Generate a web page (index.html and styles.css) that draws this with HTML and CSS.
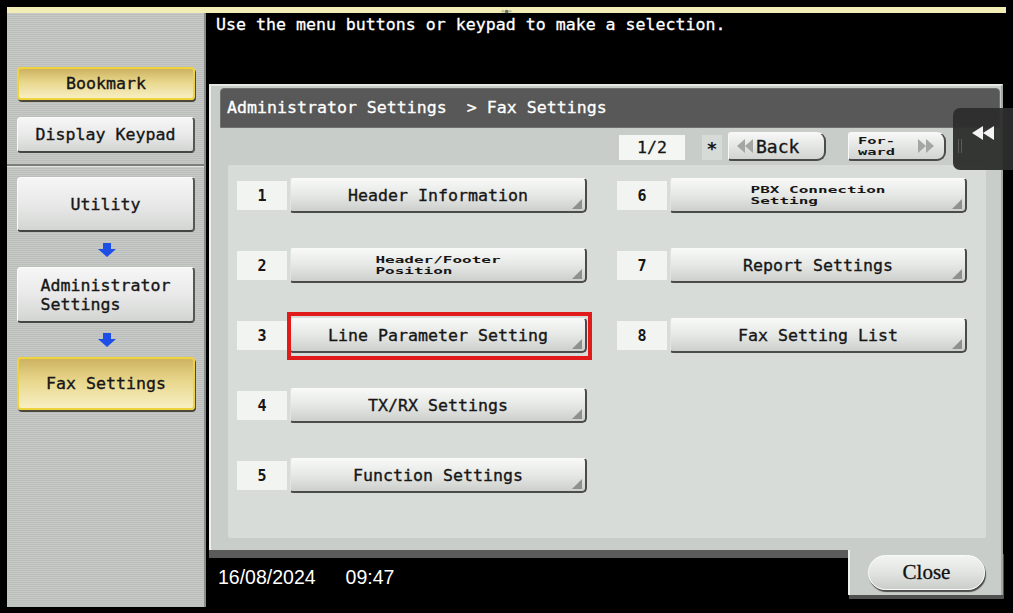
FILE: index.html
```html
<!DOCTYPE html>
<html lang="en">
<head>
<meta charset="utf-8">
<title>Fax Settings</title>
<link rel="stylesheet" href="styles.css">
</head>
<body>
<div class="frame">
  <div class="topstrip"><span class="grip">«●»</span></div>
  <div class="body">
    <aside class="sidebar">
      <div class="sb-top">
        <div class="sbtn yellow bookmark">Bookmark</div>
        <div class="sbtn grey keypad">Display Keypad</div>
      </div>
      <div class="sb-divider"></div>
      <div class="sb-nav">
        <div class="sbtn grey tall">Utility</div>
        <div class="arrow a1"><svg width="18" height="14" viewBox="0 0 18 14"><path d="M5 0h8v6h5l-9 8-9-8h5z" fill="#1d4fe6"/></svg></div>
        <div class="sbtn grey tall56"><span class="lft">Administrator<br>Settings</span></div>
        <div class="arrow a2"><svg width="18" height="14" viewBox="0 0 18 14"><path d="M5 0h8v6h5l-9 8-9-8h5z" fill="#1d4fe6"/></svg></div>
        <div class="sbtn yellow fax">Fax Settings</div>
      </div>
    </aside>
    <main class="main">
      <div class="message">Use the menu buttons or keypad to make a selection.</div>
      <div class="panel">
        <div class="titlebar">Administrator Settings  &gt; Fax Settings</div>
        <div class="pager">
          <div class="pg-box">1/2</div>
          <div class="star">*</div>
          <div class="navbtn back">
            <svg width="16" height="14" viewBox="0 0 16 14"><path d="M8 0v14L0 7z M16 0v14L8 7z" fill="#a4a6a4"/></svg>
            <span class="back-label">Back</span>
          </div>
          <div class="navbtn fwd">
            <span class="small">For-<br>ward</span>
            <svg width="16" height="14" viewBox="0 0 16 14"><path d="M0 0v14l8-7z M8 0v14l8-7z" fill="#a4a6a4"/></svg>
          </div>
        </div>
        <div class="content">
          <div class="grid">
            <div class="item"><span class="num">1</span><div class="mbtn">Header Information</div></div>
            <div class="item"><span class="num">2</span><div class="mbtn"><span class="small">Header/Footer<br>Position</span></div></div>
            <div class="item"><span class="num">3</span><div class="mbtn marked">Line Parameter Setting</div></div>
            <div class="item"><span class="num">4</span><div class="mbtn">TX/RX Settings</div></div>
            <div class="item"><span class="num">5</span><div class="mbtn">Function Settings</div></div>
            <div class="item"><span class="num">6</span><div class="mbtn"><span class="small">PBX Connection<br>Setting</span></div></div>
            <div class="item"><span class="num">7</span><div class="mbtn">Report Settings</div></div>
            <div class="item"><span class="num">8</span><div class="mbtn">Fax Setting List</div></div>
          </div>
        </div>
      </div>
      <div class="footer">
        <div class="datebar"><span class="date">16/08/2024</span><span>09:47</span></div>
        <div class="closetab"><div class="closebtn">Close</div></div>
      </div>
      <div class="sidetab">
        <span class="tabgrip"></span>
        <svg width="22" height="14" viewBox="0 0 22 14"><path d="M11 0v14L0 7z M22 0v14L11 7z" fill="#f4f4f4"/></svg>
      </div>
    </main>
  </div>
</div>
</body>
</html>
```
FILE: styles.css
```css
* { box-sizing: border-box; margin: 0; padding: 0; }
html, body { background: #000; }
body {
  width: 1013px;
  height: 613px;
  overflow: hidden;
  font-family: "DejaVu Sans Mono", "Liberation Mono", monospace;
  font-size: 16.6px;
  color: #161616;
}
.frame {
  height: 613px;
  padding: 7px 7px 6px 7px;
  display: flex;
  flex-direction: column;
}
.topstrip {
  height: 6px;
  background: #f2ecb6;
  display: flex;
  justify-content: center;
  align-items: center;
}
.grip { font-size: 6px; line-height: 5px; color: #6a6a6a; }
.body { flex: 1; display: flex; min-height: 0; }

/* sidebar */
.sidebar {
  width: 199px;
  flex: none;
  background: repeating-linear-gradient(180deg, #c7c9c7 0, #c7c9c7 1px, #bcbebc 1px, #bcbebc 2px);
  border-right: 2px solid #8a8c8a;
  display: flex;
  flex-direction: column;
}
.sb-top { padding: 54px 9px 11px 10px; display: flex; flex-direction: column; }
.sb-divider { border-top: 2px solid #7c7e7c; border-bottom: 1px solid #e2e4e2; }
.sb-nav { padding: 10px 9px 0 10px; display: flex; flex-direction: column; }
.sbtn {
  display: flex;
  align-items: center;
  justify-content: center;
  border-radius: 4px;
  white-space: nowrap;
  -webkit-text-stroke: 0.35px #161616;
}
.sbtn.grey {
  background: linear-gradient(180deg, #f5f6f5 0%, #e8e9e8 50%, #d3d5d3 100%);
  border: 1px solid #fbfbfb;
  border-right: 2px solid #555755;
  border-bottom: 2px solid #444644;
}
.sbtn.yellow {
  background: linear-gradient(180deg, #cdb261 0%, #e8d78c 45%, #f7efc4 100%);
  border: 2px solid #efd33c;
  box-shadow: 1px 2px 0 #4c4838;
}
.bookmark { height: 33px; margin-bottom: 17px; }
.keypad { height: 36px; }
.tall { height: 55px; }
.tall56 { height: 56px; }
.fax { height: 53px; }
.lft { text-align: left; line-height: 19px; }
.arrow { display: flex; justify-content: center; align-items: center; padding-left: 1px; }
.a1 { height: 35px; }
.a2 { height: 34px; }

/* main */
.main { flex: 1; position: relative; display: flex; flex-direction: column; }
.message {
  height: 71px;
  padding: 2px 0 0 10px;
  color: #fff;
  line-height: 20px;
  white-space: pre;
  -webkit-text-stroke: 0.3px #fff;
}
.panel {
  height: 466px;
  margin: 0 3px;
  background: #c9cdc9;
  border-top: 2px solid #e4e7e4;
  border-left: 2px solid #eef0ee;
  border-right: 2px solid #a4a8a4;
  padding: 2px 1px 12px 9px;
  display: flex;
  flex-direction: column;
}
.titlebar {
  height: 40px;
  background: #575857;
  border: 1px solid #6f706f;
  border-radius: 4px 4px 0 0;
  color: #fff;
  line-height: 38px;
  padding-left: 6px;
  white-space: pre;
  -webkit-text-stroke: 0.3px #fff;
}
.pager {
  height: 37px;
  display: flex;
  align-items: center;
  justify-content: flex-end;
  padding-right: 54px;
}
.pg-box {
  width: 66px;
  height: 25px;
  background: #f4f6f4;
  text-align: center;
  line-height: 25px;
  margin-right: 17px;
  margin-top: 2px;
  -webkit-text-stroke: 0.3px #161616;
}
.star {
  width: 20px;
  height: 25px;
  background: #d7dbd7;
  text-align: center;
  line-height: 27px;
  font-size: 18px;
  font-weight: bold;
  margin-right: 6px;
  margin-top: 2px;
}
.navbtn {
  width: 98px;
  height: 29px;
  border-radius: 3px 9px 9px 3px;
  background: linear-gradient(180deg, #f6f7f6 0%, #e4e6e4 50%, #d2d4d2 100%);
  border: 1px solid #f8f8f8;
  border-right: 2px solid #4a4b4a;
  border-bottom: 2px solid #4a4b4a;
  display: flex;
  align-items: center;
}
.back { padding-left: 8px; margin-right: 22px; }
.back-label { font-size: 18px; margin-left: 3px; -webkit-text-stroke: 0.35px #161616; }
.fwd { padding: 0 10px 0 9px; justify-content: space-between; }
.small {
  display: inline-block;
  text-align: left;
  font-size: 16px;
  font-weight: bold;
  line-height: 19px;
  transform: scaleY(0.58);
  -webkit-text-stroke: 0;
}
.fwd .small { font-size: 15.4px; line-height: 18.5px; }
.content {
  flex: 1;
  margin: 0 14px 0 8px;
  background: #d8dcd8;
  border-radius: 2px;
  padding: 13px 0 0 9px;
}
.grid {
  display: grid;
  grid-template-columns: 350px 350px;
  grid-template-rows: repeat(5, 35px);
  grid-auto-flow: column;
  column-gap: 30px;
  row-gap: 35px;
}
.item { display: flex; align-items: center; gap: 3px; }
.num {
  width: 50px;
  height: 29px;
  background: #f2f4f2;
  display: flex;
  align-items: center;
  justify-content: center;
  font-weight: bold;
  font-size: 15px;
}
.mbtn {
  position: relative;
  width: 297px;
  height: 35px;
  display: flex;
  align-items: center;
  justify-content: center;
  white-space: nowrap;
  background: linear-gradient(180deg, #f7f8f7 0%, #e6e8e6 50%, #cdcfcd 100%);
  border-top: 1px solid #fafafa;
  border-left: 1px solid #e2e4e2;
  border-right: 2px solid #4a4b4a;
  border-bottom: 2px solid #4a4b4a;
  border-radius: 3px 4px 5px 3px;
  -webkit-text-stroke: 0.35px #161616;
}
.mbtn::after {
  content: "";
  position: absolute;
  right: 3px;
  bottom: 2px;
  width: 10px;
  height: 10px;
  background: #8f918f;
  clip-path: polygon(100% 0, 100% 100%, 0 100%);
}
.mbtn.marked::before {
  content: "";
  position: absolute;
  left: -4px;
  top: -7px;
  right: -7px;
  bottom: -9px;
  border: 4px solid #e11b1b;
  pointer-events: none;
}

/* footer */
.footer { flex: 1; display: flex; }
.datebar {
  flex: 1;
  margin-left: 3px;
  border-top: 8px solid #5a5b5a;
  padding: 7px 0 0 9px;
  color: #fff;
  font-family: "Liberation Sans", Arial, sans-serif;
  font-size: 19.5px;
  line-height: 24px;
}
.date { margin-right: 30px; }
.closetab {
  width: 155px;
  height: 45px;
  margin-right: 3px;
  background: #c9cdc9;
  border-left: 2px solid #eef0ee;
  border-right: 2px solid #a4a8a4;
  box-shadow: 1px 4px 0 #4f504f;
  padding: 5px 0 0 18px;
}
.closebtn {
  width: 117px;
  height: 35px;
  border-radius: 18px;
  background: linear-gradient(180deg, #f2f4f2 0%, #e2e4e2 50%, #cbcdcb 100%);
  border: 1px solid #fafafa;
  box-shadow: 1px 2px 1px #4a4b4a;
  display: flex;
  align-items: center;
  justify-content: center;
  font-family: "Liberation Serif", "Times New Roman", serif;
  font-size: 21px;
  color: #111;
  -webkit-text-stroke: 0.3px #111;
}

/* overlay side tab */
.sidetab {
  position: absolute;
  top: 95px;
  right: -7px;
  width: 60px;
  height: 62px;
  background: rgba(44, 45, 44, 0.95);
  border-radius: 7px 0 0 7px;
  display: flex;
  align-items: center;
  padding-left: 5px;
}
.tabgrip {
  width: 4px;
  height: 14px;
  margin-top: 14px;
  margin-right: 10px;
  border-left: 1px solid #5a5a5a;
  border-right: 1px solid #5a5a5a;
}
.sidetab svg { margin-top: -12px; }
```
